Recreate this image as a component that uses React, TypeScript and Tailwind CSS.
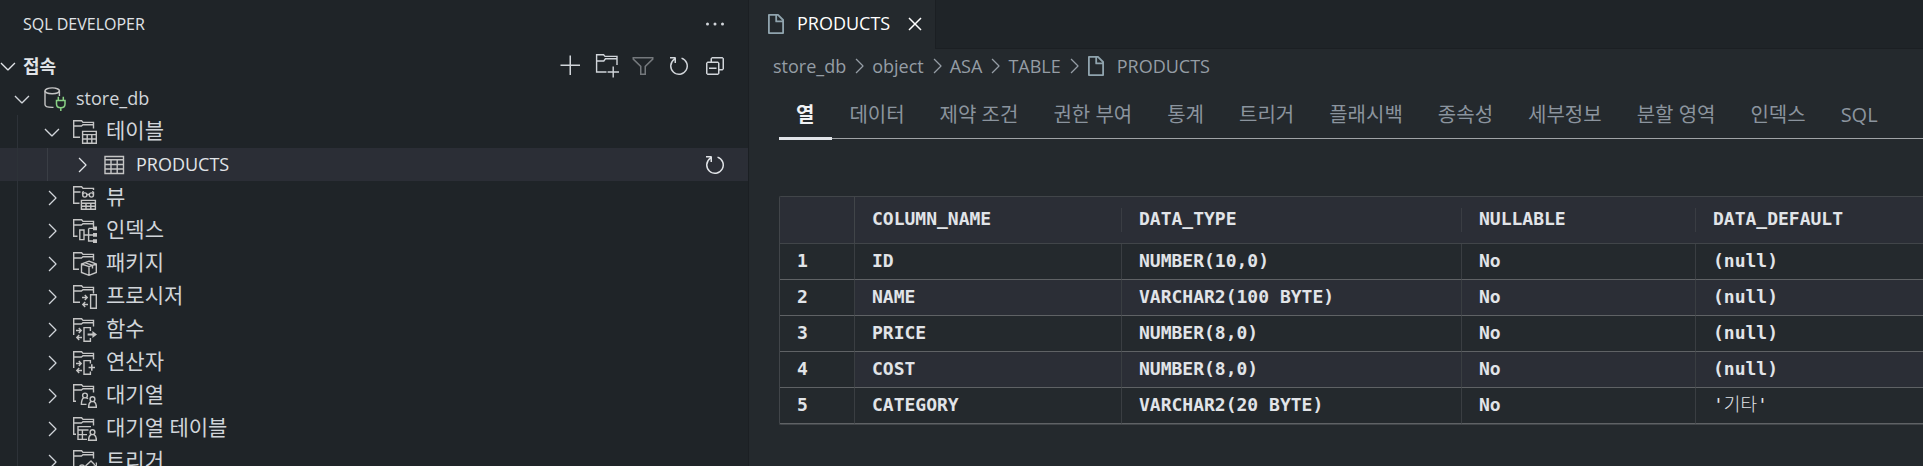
import React, { useState } from 'react';
import {
  VscAdd,
  VscChevronDown,
  VscChevronRight,
  VscClose,
  VscCollapseAll,
  VscEllipsis,
  VscFilter,
  VscRefresh,
} from 'react-icons/vsc';

type IconName =
  | 'database'
  | 'table'
  | 'tables'
  | 'views'
  | 'indexes'
  | 'packages'
  | 'procedures'
  | 'functions'
  | 'operators'
  | 'queues'
  | 'queueTables'
  | 'triggers';

interface TreeItem {
  label: string;
  icon: IconName;
  level: 1 | 2 | 3;
  open?: boolean;
}

const treeItems: TreeItem[] = [
  { label: 'store_db', icon: 'database', level: 1, open: true },
  { label: '테이블', icon: 'tables', level: 2, open: true },
  { label: 'PRODUCTS', icon: 'table', level: 3 },
  { label: '뷰', icon: 'views', level: 2 },
  { label: '인덱스', icon: 'indexes', level: 2 },
  { label: '패키지', icon: 'packages', level: 2 },
  { label: '프로시저', icon: 'procedures', level: 2 },
  { label: '함수', icon: 'functions', level: 2 },
  { label: '연산자', icon: 'operators', level: 2 },
  { label: '대기열', icon: 'queues', level: 2 },
  { label: '대기열 테이블', icon: 'queueTables', level: 2 },
  { label: '트리거', icon: 'triggers', level: 2 },
];

const breadcrumbs = ['store_db', 'object', 'ASA', 'TABLE'];

const detailTabs = [
  '열', '데이터', '제약 조건', '권한 부여', '통계', '트리거',
  '플래시백', '종속성', '세부정보', '분할 영역', '인덱스', 'SQL',
];

const columns = ['COLUMN_NAME', 'DATA_TYPE', 'NULLABLE', 'DATA_DEFAULT'];

const rows = [
  ['ID', 'NUMBER(10,0)', 'No', '(null)'],
  ['NAME', 'VARCHAR2(100 BYTE)', 'No', '(null)'],
  ['PRICE', 'NUMBER(8,0)', 'No', '(null)'],
  ['COST', 'NUMBER(8,0)', 'No', '(null)'],
  ['CATEGORY', 'VARCHAR2(20 BYTE)', 'No', "'기타'"],
];

const hasHangul = (text: string) => /[가-힣]/.test(text);

const Svg: React.FC<{ children: React.ReactNode }> = ({ children }) => (
  <svg viewBox="0 0 24 24" className="w-6 h-6 shrink-0" fill="none" stroke="currentColor" strokeWidth="1.4" aria-hidden="true">
    {children}
  </svg>
);

// Folder outline shared by all object type icons, `stem` is where the left edge ends
const Folder: React.FC<{ stem: string }> = ({ stem }) => (
  <path d={`${stem}V.7H8.6L10 2.4H20.5V8.5M.7 6H8.4L10 4.8H20.5`} />
);

const CallArrows: React.FC<{ x: number }> = ({ x }) => (
  <path d={`M${x} 12.5h5m-2.2 -2.4l2.4 2.4l-2.4 2.4M${x + 6} 19.5h-5m2.2 -2.4l-2.4 2.4l2.4 2.4`} />
);

const Person: React.FC<{ x: number; y: number }> = ({ x, y }) => (
  <>
    <circle cx={x} cy={y} r="2.4" />
    <path d={`M${x - 1.4} ${y + 2.2}C${x - 3.4} ${y + 3.4} ${x - 3.9} ${y + 5} ${x - 3.9} ${y + 8}H${x + 3.9}C${x + 3.9} ${y + 5} ${x + 3.4} ${y + 3.4} ${x + 1.4} ${y + 2.2}`} />
  </>
);

const ObjectIcon: React.FC<{ name: IconName }> = ({ name }) => {
  switch (name) {
    case 'database':
      return (
        <Svg>
          <ellipse cx="9.2" cy="3.8" rx="7.2" ry="2.9" />
          <path d="M2 3.8V17.5C2 19.2 5 20.4 9.2 20.4H10.5M16.4 3.8V9" />
          <path className="text-[#89d185]" d="M15.3 9.8V13.5M20.3 9.8V13.5M13.5 13.6H22V17C22 19.2 20.5 20.8 17.8 20.8S13.5 19.2 13.5 17ZM17.8 20.8V24" stroke="currentColor" strokeWidth="1.5" />
        </Svg>
      );
    case 'table':
      return (
        <Svg>
          <path d="M2 3.5H20.5V20.5H2ZM2 6.8H20.5M2 11.5H20.5M2 16H20.5M8 6.8V20.5M14.2 6.8V20.5" />
        </Svg>
      );
    case 'tables':
      return (
        <Svg>
          <Folder stem="M7 17.3H.7" />
          <path d="M9.6 11.4H23.3V23.3H9.6ZM9.6 14.6H23.3M9.6 19H23.3M14.2 14.6V23.3M18.8 14.6V23.3" />
        </Svg>
      );
    case 'views':
      return (
        <Svg>
          <path d="M6.5 17.3H.7V.7H8.6L10 2.4H20.5V4M.7 6H7.5" />
          <circle cx="11.8" cy="9" r="2.1" />
          <circle cx="18.4" cy="9" r="2.1" />
          <path d="M13.8 9L14.6 8.4H15.6L16.4 9M9.6 8.6V6.2L11 5.6M20.5 8.6V6.2L19 5.6M8.4 14.4H22.4V23.3H8.4ZM8.4 17.2H22.4M8.4 20.2H22.4M13 17.2V23.3M17.8 17.2V23.3" />
        </Svg>
      );
    case 'indexes':
      return (
        <Svg>
          <Folder stem="M4.5 17.3H.7" />
          <path d="M6.8 11H11V20.6H6.8ZM11 16H20M15.6 9.4V22H20M15.6 9.4H20" />
          <path d="M20 7.4H24V11.2H20ZM20 14H24V17.8H20ZM20 20.2H24V24H20Z" fill="currentColor" stroke="none" />
        </Svg>
      );
    case 'packages':
      return (
        <Svg>
          <Folder stem="M6 17.3H.7" />
          <path d="M16 9.2L23.3 12V20.4L16 23.3L8.5 20.4V12ZM8.5 12L16 14.6L23.3 12M16 14.6V23.3M12 10.7L19.5 13.4V16.5" />
        </Svg>
      );
    case 'procedures':
      return (
        <Svg>
          <Folder stem="M7 17.3H.7" />
          <CallArrows x={9} />
          <path d="M17.6 9.8H23.3V23.3H17.6Z" />
        </Svg>
      );
    case 'functions':
      return (
        <Svg>
          <Folder stem="M.7 17" />
          <CallArrows x={3} />
          <path d="M17.4 13V9.6H11V23.3H17.4V20" />
          <path d="M14.6 15.4H19.4V13L24 16.5L19.4 20V17.6H14.6Z" fill="currentColor" stroke="none" />
        </Svg>
      );
    case 'operators':
      return (
        <Svg>
          <Folder stem="M.7 17" />
          <CallArrows x={3} />
          <path d="M17.4 12.4V9.6H11V23.3H17.4V20.6" />
          <path d="M15.6 16.5H22M18.8 13.3V19.7" strokeWidth="1.6" />
        </Svg>
      );
    case 'queues':
      return (
        <Svg>
          <Folder stem="M3 17.3H.7" />
          <path d="M10.6 13.8C8.8 15 8.4 17 8.4 20.4H13.5M13.4 13.6L15 14.8" />
          <circle cx="12" cy="11.5" r="2.4" />
          <Person x={19.5} y={15.2} />
        </Svg>
      );
    case 'queueTables':
      return (
        <Svg>
          <Folder stem="M3 17.3H.7" />
          <path d="M18 9.6H5V22.4H14M5 13H15.5M5 17.6H14M9.4 13V22.4" />
          <Person x={19.5} y={15.2} />
        </Svg>
      );
    case 'triggers':
      return (
        <Svg>
          <Folder stem="M4 17.3H.7" />
          <circle cx="9" cy="17.6" r="2.6" />
          <path d="M12.5 16L18 11L23.4 16.4M20 16.4H23.4V12.5" />
        </Svg>
      );
  }
};

const FileIcon: React.FC = () => (
  <svg viewBox="0 0 16 20" className="w-4 h-5 shrink-0 text-[#90a4ae]" fill="none" stroke="currentColor" strokeWidth="1.8" strokeLinejoin="round" aria-hidden="true">
    <path d="M.9 .9H10L15.1 6V19.1H.9ZM8.2 .9V7.4H15.1" />
  </svg>
);

const NewFolderIcon: React.FC = () => (
  <Svg>
    <path d="M11.5 18H1.6V.8H8.6L10 2.4H22V11M1.6 7H8.8L10.4 4.8H22M18.2 12.5V23.5M12.6 18H24" />
  </Svg>
);

const indentClass = { 1: 'pl-[10px]', 2: 'pl-10', 3: 'pl-[70px]' };

const TreeRow: React.FC<{ item: TreeItem; selected: boolean; onSelect: () => void }> = ({ item, selected, onSelect }) => {
  const Chevron = item.open ? VscChevronDown : VscChevronRight;

  return (
    <li
      className={`relative flex h-[33px] shrink-0 items-center pr-[21px] ${selected ? 'bg-[#2b2e36] text-[#e1e4e8]' : 'text-[#d1d5da]'}`}
    >
      {item.level > 1 && <span className="absolute inset-y-0 left-[17px] w-px bg-[#2d3238]" />}
      {item.level > 2 && <span className="absolute inset-y-0 left-[47px] w-px bg-[#3a3e45]" />}
      <button
        type="button"
        onClick={onSelect}
        className={`flex h-full grow items-center gap-[9px] text-left ${indentClass[item.level]}`}
      >
        <Chevron className="w-6 h-6 shrink-0" />
        <span className="text-[#c5c5c5]">
          <ObjectIcon name={item.icon} />
        </span>
        <span className={hasHangul(item.label) ? 'text-[21px] leading-none pb-0.5' : 'text-[18px]'}>{item.label}</span>
      </button>
      {selected && (
        <button type="button" aria-label="새로고침">
          <VscRefresh className="w-6 h-6" />
        </button>
      )}
    </li>
  );
};

const Sidebar: React.FC = () => {
  const [selected, setSelected] = useState('PRODUCTS');

  return (
    <aside className="flex w-[749px] shrink-0 flex-col border-r border-[#1b1f23] bg-[#1f2428] text-[#d1d5da]">
      <header className="flex h-12 shrink-0 items-center justify-between pl-[23px] pr-[21px]">
        <h2 className="text-[16px] text-[#e1e4e8]">SQL DEVELOPER</h2>
        <button type="button" aria-label="더 보기">
          <VscEllipsis className="w-6 h-6" />
        </button>
      </header>

      <div className="flex h-[34px] shrink-0 items-center justify-between pt-0.5 pr-[21px]">
        <button type="button" className="flex items-center -ml-1 text-[#e1e4e8]">
          <VscChevronDown className="w-6 h-6" />
          <span className="pl-[3px] text-[18px] font-bold">접속</span>
        </button>
        <div className="flex gap-3">
          <button type="button" aria-label="접속 생성">
            <VscAdd className="w-6 h-6" />
          </button>
          <button type="button" aria-label="폴더 생성">
            <NewFolderIcon />
          </button>
          <button type="button" aria-label="필터" className="text-[#74787c]">
            <VscFilter className="w-6 h-6" />
          </button>
          <button type="button" aria-label="새로고침">
            <VscRefresh className="w-6 h-6" />
          </button>
          <button type="button" aria-label="모두 접기">
            <VscCollapseAll className="w-6 h-6" />
          </button>
        </div>
      </div>

      <ul className="flex min-h-0 grow flex-col overflow-hidden">
        {treeItems.map(item => (
          <TreeRow
            key={item.label}
            item={item}
            selected={item.label === selected}
            onSelect={() => setSelected(item.label)}
          />
        ))}
      </ul>
    </aside>
  );
};

const ColumnsTable: React.FC = () => (
  <div className="rounded-tl-xs rounded-bl-xs border border-r-0 border-[#414549]">
    <table className="w-full table-fixed border-separate border-spacing-0 text-left font-['DejaVu_Sans_Mono','Noto_Sans_CJK_KR',monospace] text-[18px] leading-6 text-[#e1e4e8]">
      <colgroup>
        <col className="w-[75px]" />
        <col className="w-[267px]" />
        <col className="w-[340px]" />
        <col className="w-[234px]" />
        <col />
      </colgroup>
      <thead>
        <tr className="h-[47px] bg-[#2b2e36]">
          <th className="border-b border-r border-[#414549] p-0" />
          {columns.map((column, i) => (
            <th key={column} className="border-b border-[#414549] p-0">
              <div className={`flex h-6 items-center pl-[17px] pb-0.5 ${i < columns.length - 1 ? 'border-r border-[#3a3d43]' : ''}`}>
                {column}
              </div>
            </th>
          ))}
        </tr>
      </thead>
      <tbody>
        {rows.map((row, i) => (
          <tr key={row[0]} className="h-9">
            <td className="border-b border-r border-b-[#5f6265] border-r-[#3a3e42] p-0 pb-0.5 pl-[17px] font-bold">{i + 1}</td>
            {row.map((cell, j) => (
              <td
                key={j}
                className={`border-b border-b-[#5f6265] border-r-[#3a3e42] p-0 pb-0.5 pl-[17px] ${hasHangul(cell) ? 'font-light' : 'font-bold'} ${j < 3 ? 'border-r' : ''} ${i % 2 ? 'bg-[#2b2e36]' : ''}`}
              >
                {cell}
              </td>
            ))}
          </tr>
        ))}
      </tbody>
    </table>
  </div>
);

const Editor: React.FC = () => {
  const [activeTab, setActiveTab] = useState('열');

  return (
    <main className="flex min-w-0 grow flex-col overflow-hidden bg-[#24292d]">
      <div className="flex h-[49px] shrink-0 bg-[#1f2428]">
        <div className="flex items-center border-r border-[#1b1f23] bg-[#24292d] pb-[2px] pl-[19px] pr-2 text-white">
          <FileIcon />
          <span className="px-[13px] text-[18px]">PRODUCTS</span>
          <button type="button" aria-label="닫기">
            <VscClose className="w-6 h-6" />
          </button>
        </div>
        <div className="grow border-b border-[#1b1f23]" />
      </div>

      <nav className="flex h-[34px] shrink-0 items-center pl-6 text-[18px] text-[#959da5]">
        {breadcrumbs.map(crumb => (
          <React.Fragment key={crumb}>
            <a href="#">{crumb}</a>
            <VscChevronRight className="mx-px w-6 h-6" />
          </React.Fragment>
        ))}
        <a href="#" className="flex items-center gap-[13px] pl-px">
          <FileIcon />
          PRODUCTS
        </a>
      </nav>

      <div className="flex grow flex-col pl-[30px]">
        <div className="mt-[9px] flex h-12 shrink-0 bg-[linear-gradient(#a0a3a6,#a0a3a6)] bg-[length:100%_1px] bg-[position:0_46px] bg-no-repeat">
          {detailTabs.map(tab => (
            <button
              key={tab}
              type="button"
              onClick={() => setActiveTab(tab)}
              className={`flex h-12 shrink-0 items-center border-b-3 pl-[17px] pr-[18px] text-[20px] ${tab === activeTab
                ? 'border-[#e1e4e8] font-bold text-[#f0f2f4]'
                : 'border-transparent text-[#8b949e]'
                }`}
            >
              {tab}
            </button>
          ))}
        </div>
        <div className="mt-14">
          <ColumnsTable />
        </div>
      </div>
    </main>
  );
};

const App: React.FC = () => (
  <div className="flex h-screen overflow-hidden bg-[#24292d] font-['Open_Sans','Noto_Sans_CJK_KR',sans-serif]">
    <Sidebar />
    <Editor />
  </div>
);

export default App;
